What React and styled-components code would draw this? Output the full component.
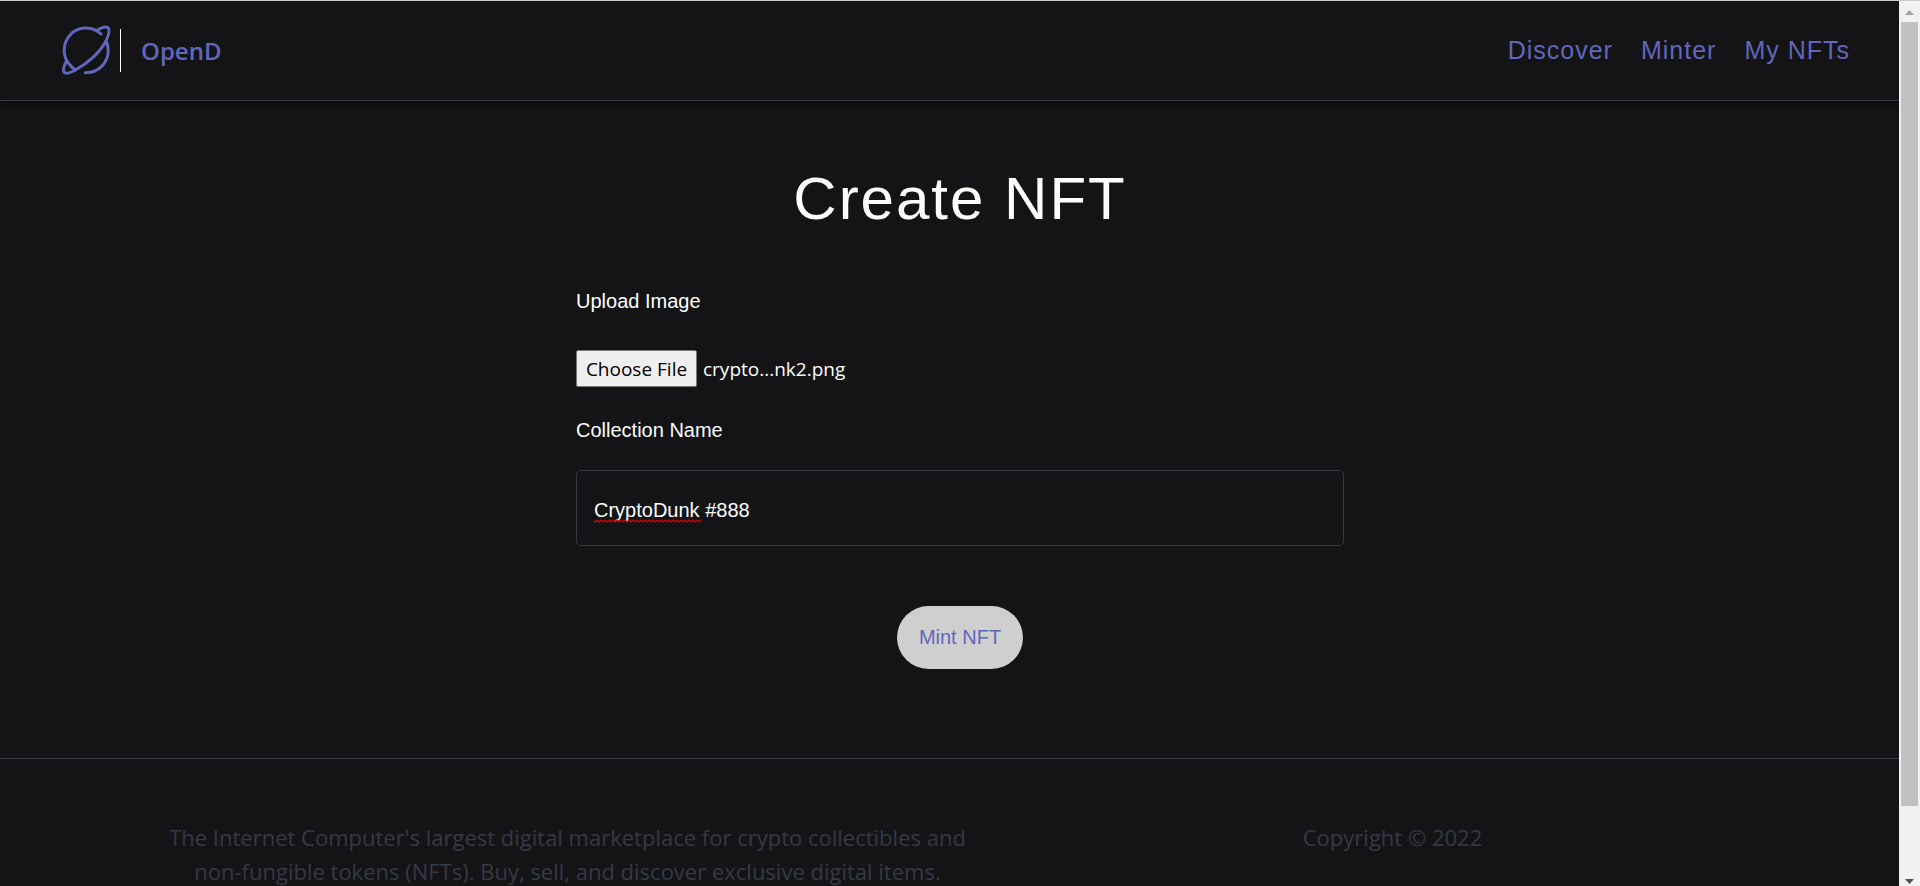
import React, { useState } from "react";
import styled, { createGlobalStyle } from "styled-components";

const colors = {
  page: "#141416",
  line: "#353945",
  accent: "#6166bd",
  text: "#fcfcfd",
};

const sans = `"Liberation Sans", Arial, sans-serif`;
const humanist = `"Segoe UI", "Open Sans", sans-serif`;

const GlobalStyle = createGlobalStyle`
  *, *::before, *::after { box-sizing: border-box; }
  html, body { margin: 0; height: 100%; }
  body {
    background: ${colors.page};
    color: ${colors.text};
    font-family: ${sans};
    font-size: 20px;
    overflow: hidden;
  }
`;

const Page = styled.div`
  height: 100vh;
  overflow: hidden;
  border-top: 1px solid #cccccc;
`;

const Header = styled.header`
  display: flex;
  align-items: center;
  justify-content: space-between;
  height: 100px;
  padding: 0 70px 2px 61px;
  border-bottom: 1px solid ${colors.line};
  box-shadow: 0 3px 8px rgba(0, 0, 0, 0.45);
`;

const Brand = styled.div`
  display: flex;
  align-items: center;
`;

const Divider = styled.span`
  width: 1px;
  height: 43px;
  margin: 2px 20px 0 9px;
  background: #ffffff;
`;

const BrandName = styled.h5`
  margin: 2px 0 0;
  color: ${colors.accent};
  font: 600 24px/32px ${humanist};
`;

const Nav = styled.nav`
  display: flex;
  gap: 28px;
`;

const NavLink = styled.a`
  color: ${colors.accent};
  font-size: 25px;
  line-height: 32px;
  letter-spacing: 1px;
  text-decoration: none;
`;

const Main = styled.main`
  display: flex;
  flex-direction: column;
  align-items: center;
  padding: 60px 24px 89px;
`;

const Title = styled.h3`
  margin: 0;
  font-weight: 400;
  font-size: 60px;
  line-height: 76px;
  letter-spacing: 2px;
`;

const Form = styled.form`
  display: flex;
  flex-direction: column;
  width: 100%;
  max-width: 768px;
  margin-top: 50px;
`;

const FieldTitle = styled.label`
  font-size: 20px;
  line-height: 28px;
`;

const FileRow = styled.div`
  position: relative;
  display: flex;
  align-items: center;
  gap: 6px;
  margin: 35px 0 29px;
  font: 400 19px/26px ${humanist};
`;

const FileInput = styled.input`
  position: absolute;
  width: 121px;
  height: 100%;
  opacity: 0;
`;

const FileButton = styled.label`
  display: flex;
  justify-content: center;
  width: 121px;
  padding: 5px 0 4px;
  border: 1px solid #767676;
  border-radius: 2px;
  background: #efefef;
  color: #000000;
`;

const TextField = styled.div`
  position: relative;
  margin-top: 26px;
`;

const TextInput = styled.input`
  display: block;
  width: 100%;
  height: 76px;
  padding: 5px 17px 0;
  border: 1px solid ${colors.line};
  border-radius: 5px;
  outline: none;
  background: transparent;
  color: ${colors.text};
  font: 400 20px ${sans};
`;

const Squiggle = styled.svg`
  position: absolute;
  left: 18px;
  top: 49px;
  pointer-events: none;
`;

const MintButton = styled.button`
  align-self: center;
  height: 63px;
  margin-top: 60px;
  padding: 0 22px;
  border: 0;
  border-radius: 32px;
  background: #cfcfcf;
  color: ${colors.accent};
  font: 400 20px ${sans};
`;

const Footer = styled.footer`
  display: grid;
  grid-template-columns: 1fr 1fr;
  padding: 61px 115px 60px 155px;
  border-top: 1px solid ${colors.line};
  color: ${colors.line};
  font: 400 22px/34px ${humanist};
  text-align: center;
`;

const FooterText = styled.p`
  margin: 0;
`;

const ScrollTrack = styled.div`
  position: fixed;
  top: 1px;
  right: 0;
  bottom: 0;
  display: flex;
  flex-direction: column;
  width: 21px;
  padding: 0 2px;
  background: #f1f1f1;
`;

const ScrollArrow = styled.svg`
  flex: none;
  width: 17px;
  height: 21px;
`;

const ScrollRail = styled.div`
  flex: 1;
`;

const ScrollThumb = styled.div`
  height: 93%;
  background: #c1c1c1;
`;

function Logo() {
  return (
    <svg width="50" height="50" viewBox="62 70 150 150" fill="none" stroke={colors.accent} strokeWidth="9" strokeLinecap="round" strokeLinejoin="round" aria-hidden="true">
      <path d="M182 97 C154 72 113 74 90 99 C66 125 67 162 84 184 C90 192 97 199 105 205" />
      <path d="M197 118 C210 146 203 175 184 194 C171 207 154 213 135 213" />
      <path d="M168 87 C184 77 197 73 204 79 C209 86 204 102 197 118 C180 150 145 184 105 205 C90 213 76 218 71 212 C68 206 71 193 78 179" />
    </svg>
  );
}

export default function App() {
  const [name, setName] = useState("CryptoDunk #888");
  const [fileName, setFileName] = useState("crypto...nk2.png");

  return (
    <>
      <GlobalStyle />
      <Page>
        <Header>
          <Brand>
            <Logo />
            <Divider />
            <BrandName>OpenD</BrandName>
          </Brand>
          <Nav>
            <NavLink href="#discover">Discover</NavLink>
            <NavLink href="#minter">Minter</NavLink>
            <NavLink href="#my-nfts">My NFTs</NavLink>
          </Nav>
        </Header>

        <Main>
          <Title>Create NFT</Title>
          <Form onSubmit={(e) => e.preventDefault()}>
            <FieldTitle htmlFor="image">Upload Image</FieldTitle>
            <FileRow>
              <FileInput
                id="image"
                type="file"
                onChange={(e) => e.target.files[0] && setFileName(e.target.files[0].name)}
              />
              <FileButton htmlFor="image">Choose File</FileButton>
              <span>{fileName}</span>
            </FileRow>
            <FieldTitle htmlFor="collection">Collection Name</FieldTitle>
            <TextField>
              <TextInput
                id="collection"
                type="text"
                spellCheck={false}
                value={name}
                onChange={(e) => setName(e.target.value)}
              />
              <Squiggle width="107" height="4" aria-hidden="true">
                <defs>
                  <pattern id="wave" width="4" height="4" patternUnits="userSpaceOnUse">
                    <path d="M-1 0 L1 2 L3 0 L5 2" transform="translate(0 1)" stroke="#e00000" strokeWidth="1.2" fill="none" />
                  </pattern>
                </defs>
                <rect width="107" height="4" fill="url(#wave)" />
              </Squiggle>
            </TextField>
            <MintButton type="submit">Mint NFT</MintButton>
          </Form>
        </Main>

        <Footer>
          <FooterText>
            The Internet Computer's largest digital marketplace for crypto collectibles and
            non-fungible tokens (NFTs). Buy, sell, and discover exclusive digital items.
          </FooterText>
          <FooterText>Copyright © 2022</FooterText>
        </Footer>
      </Page>

      <ScrollTrack aria-hidden="true">
        <ScrollArrow viewBox="0 0 17 21">
          <path d="M4 14 L8.500 9 L13 14 Z" fill="#a3a3a3" />
        </ScrollArrow>
        <ScrollRail>
          <ScrollThumb />
        </ScrollRail>
        <ScrollArrow viewBox="0 0 17 21">
          <path d="M4 14 L8.500 19 L13 14 Z" fill="#505050" />
        </ScrollArrow>
      </ScrollTrack>
    </>
  );
}
